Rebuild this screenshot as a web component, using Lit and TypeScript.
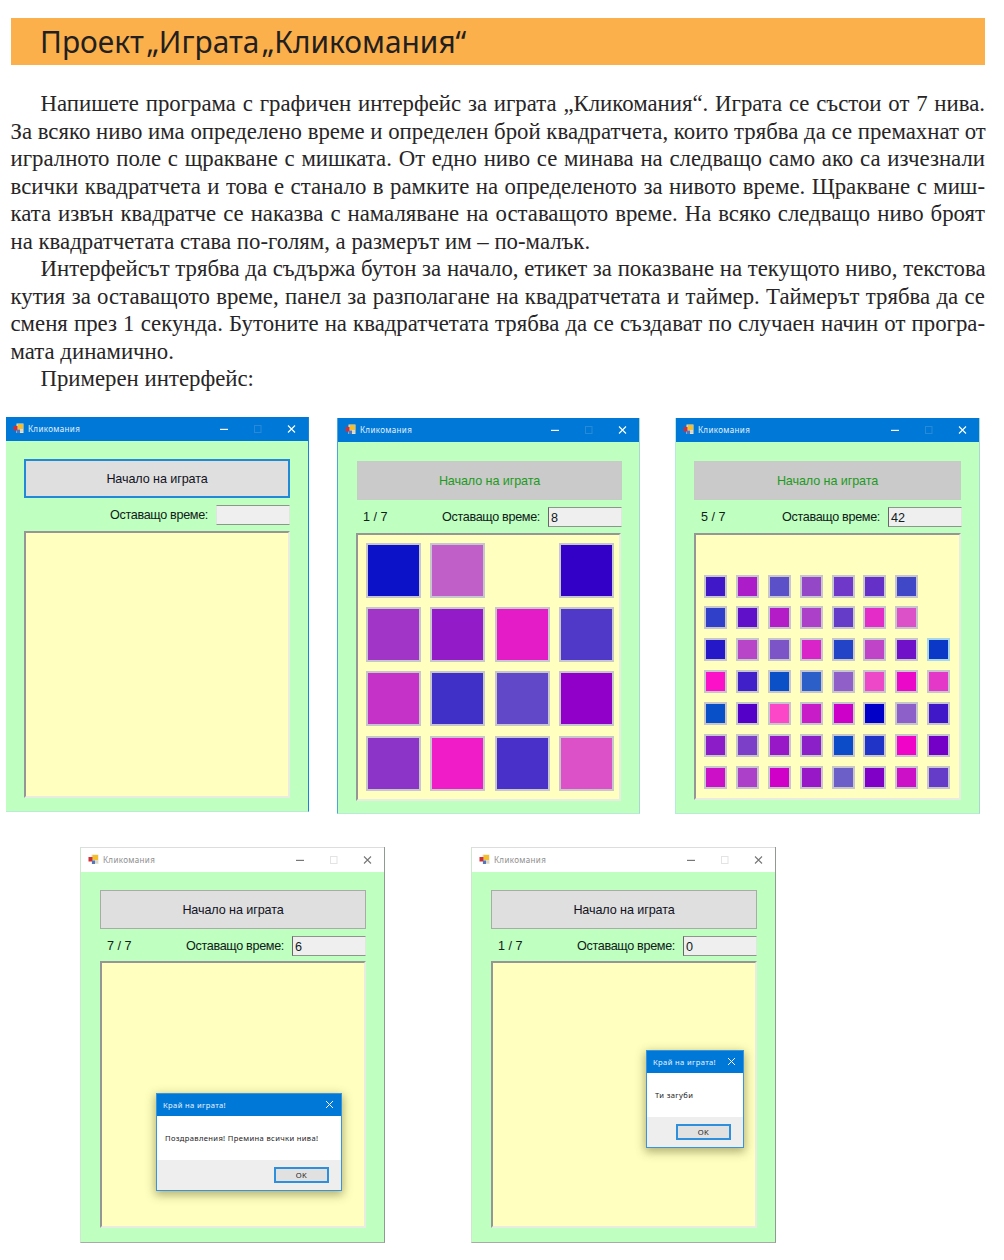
import { LitElement, html, css, svg, nothing } from "lit";
import { customElement, property } from "lit/decorators.js";
import { classMap } from "lit/directives/class-map.js";
import { styleMap } from "lit/directives/style-map.js";

type Line = { text: string; kind?: "indent" | "end" | "indent end"; };

const LINES: Line[] = [
  { text: "Напишете програма с графичен интерфейс за играта „Кликомания“. Играта се състои от 7 нива.", kind: "indent" },
  { text: "За всяко ниво има определено време и определен брой квадратчета, които трябва да се премахнат от" },
  { text: "игралното поле с щракване с мишката. От едно ниво се минава на следващо само ако са изчезнали" },
  { text: "всички квадратчета и това е станало в рамките на определеното за нивото време. Щракване с миш-" },
  { text: "ката извън квадратче се наказва с намаляване на оставащото време. На всяко следващо ниво броят" },
  { text: "на квадратчетата става по-голям, а размерът им – по-малък.", kind: "end" },
  { text: "Интерфейсът трябва да съдържа бутон за начало, етикет за показване на текущото ниво, текстова", kind: "indent" },
  { text: "кутия за оставащото време, панел за разполагане на квадратчетата и таймер. Таймерът трябва да се" },
  { text: "сменя през 1 секунда. Бутоните на квадратчетата трябва да се създават по случаен начин от програ-" },
  { text: "мата динамично.", kind: "end" },
  { text: "Примерен интерфейс:", kind: "indent end" },
];

const LARGE = [
  "#0b12c8", "#c05fc8", "", "#3300c8",
  "#a035c8", "#941cc8", "#e41cc8", "#5038c8",
  "#c432c8", "#4030c8", "#6048c8", "#9000c8",
  "#8c34c8", "#f01cc8", "#4830c8", "#dc50c8",
];

const SMALL = [
  "", "", "", "", "", "", "", "",
  "#4018c8", "#ac1cc8", "#5c50c8", "#9448c8", "#7038c8", "#6430c8", "#4048c8", "",
  "#3040c8", "#6010c8", "#b41cc8", "#ac40c8", "#643cc8", "#e42cc8", "#dc50c8", "",
  "#2418c8", "#b844c8", "#7c54c8", "#d824c8", "#2444c8", "#c044c8", "#7010c8", "#0c38c8",
  "#fc10c8", "#4020c8", "#0c50c8", "#2c60c8", "#9060c8", "#ec48c8", "#ec08c8", "#e438c8",
  "#0850c8", "#5400c8", "#fc48c8", "#c81cc8", "#cc00c8", "#0000c8", "#8c60c8", "#4018c8",
  "#8c1cc8", "#7c40c8", "#9818c8", "#8c20c8", "#0c4cc8", "#2034c8", "#f004c8", "#7400c8",
  "#cc10c8", "#ac40c8", "#d000c8", "#9818c8", "#6c60c8", "#8000c8", "#cc10c8", "#643cc8",
];

@customElement("game-window")
export class GameWindow extends LitElement {
  @property() level = "";
  @property() time = "";
  @property() mode = "idle";
  @property() message = "";
  @property({ type: Boolean }) inactive = false;
  @property({ attribute: false }) tiles: string[] = [];
  @property({ type: Number }) columns = 4;

  static styles = css`
    :host { display: block; position: relative; box-sizing: border-box; font-family: "Liberation Sans", sans-serif; }
    .frame { box-sizing: border-box; height: 100%; background: #bfffbf; display: flex; flex-direction: column; border-right: 1px solid #a9d8d0; border-bottom: 1px solid #b9ecd6; }
    .frame.idle { border-right: 1px solid #1784d8; }
    .frame.play { border-left: 1px solid #4aa6dc; }
    .frame.play.wide { border-left-color: #b4ecd8; }
    .frame.inactive { border-right: 1px solid #8f9b8f; border-bottom: 1px solid #a3ada3; border-left: 1px solid #cfe6cf; }
    .bar { height: 24px; flex: none; background: #0078d7; color: #e6f2fc; display: flex; align-items: center; padding: 0 9px 0 7px; }
    .inactive .bar { background: #fff; color: #8d8d8d; border-top: 1px solid #ddd; box-sizing: border-box; height: 25px; }
    .icon { width: 11px; height: 11px; flex: none; }
    .name { margin-left: 4px; font: 8px/12px "Noto Sans", sans-serif; letter-spacing: 0.35px; flex: 1; white-space: nowrap; }
    .controls { width: 81px; height: 12px; flex: none; }
    .client { flex: 1; padding: 18px 18px 13px; display: flex; flex-direction: column; }
    .play .client { padding-top: 19px; }
    .inactive .client { padding-left: 19px; padding-bottom: 14px; }
    .start { height: 39px; flex: none; box-sizing: border-box; display: flex; align-items: center; justify-content: center; background: #dfdfdf; border: 1px solid #a9aba9; color: #111122; font-size: 12.6px; letter-spacing: -0.1px; line-height: 15px; padding-top: 2px; white-space: nowrap; }
    .idle .start { border: 2px solid #2288d8; }
    .play .start { background: #cacaca; border-color: #c5cbc5; color: #1d9a20; }
    .status { height: 20px; flex: none; margin: 7px 0 6px; display: flex; align-items: center; color: #10201a; font-size: 12.6px; white-space: pre; }
    .inactive .status { margin-bottom: 5px; }
    .play .status { margin-right: -1px; }
    .play:not(.wide) .start { margin: 0 -1px 0 1px; }
    .level, .left { padding-top: 1px; }
    .level { flex: 1; padding-left: 7px; }
    .left { margin-right: 8px; letter-spacing: -0.33px; }
    .time { width: 74px; height: 20px; box-sizing: border-box; background: #efefef; border: 1px solid #8d958d; border-left-color: #666; border-right-color: #dfe8df; padding-left: 2px; line-height: 20px; }
    .idle .time { border-left-color: #dfe6df; }
    .field { flex: 1; box-sizing: border-box; background: #ffffbf; border: 2px solid; border-color: #969696 #e9ece0 #e9ece0 #969696; display: grid; align-content: start; justify-content: start; }
    .field.c4 { grid-template-columns: repeat(4, 55px); grid-auto-rows: 55px; gap: 9.4px; padding: 8px; }
    .field.c8 { grid-template-columns: repeat(8, 23px); grid-auto-rows: 23px; gap: 8.9px; padding: 8px; }
    .tile { border: 2px solid #c6c6cc; }
    .tile.gap { visibility: hidden; }
    .tile.focus { border-color: #a8d8e8; }
    .dialog { position: absolute; box-sizing: border-box; height: 98px; border: 1px solid #3a94dc; background: #fff; box-shadow: 0 3px 9px 1px rgba(80, 80, 30, 0.45); display: flex; flex-direction: column; font: 7.6px/12px "Noto Sans", sans-serif; letter-spacing: 0.35px; }
    .dialog.win { left: 76px; top: 246px; width: 186px; }
    .dialog.lose { left: 175px; top: 203px; width: 98px; }
    .caption { height: 22px; flex: none; background: #0078d7; color: #e8f4ff; display: flex; align-items: center; justify-content: space-between; padding: 0 7px 0 6px; white-space: nowrap; }
    .cross { width: 9px; height: 9px; }
    .text { flex: 1; display: flex; align-items: center; padding-left: 8px; color: #222; white-space: nowrap; }
    .footer { height: 30px; flex: none; background: #eee; display: flex; align-items: center; justify-content: flex-end; padding-right: 12px; }
    .ok { width: 55px; height: 16px; box-sizing: border-box; border: 2px solid #2e90dc; background: #e1e1e1; display: flex; align-items: center; justify-content: center; color: #222; }
  `;

  private get icon() {
    return html`<svg class="icon" viewBox="0 0 11 11">
      <rect x="3.5" y="0.5" width="7" height="9.5" fill="#e7e3c9"></rect>
      <rect x="4.5" y="1" width="5.5" height="5" fill="#f5bf2c"></rect>
      <rect x="0.5" y="3" width="4" height="4.5" fill="#cf3038"></rect>
      <rect x="4" y="6.5" width="3" height="3.5" fill="#5276bd"></rect>
      <rect x="7" y="6.5" width="3" height="2.5" fill="#d9d5c8"></rect>
    </svg>`;
  }

  private get controls() {
    const ink = this.inactive ? "#777" : "#fff";
    const dim = this.inactive ? "#e3e3e3" : "#2889d6";
    return html`<svg class="controls" viewBox="0 0 81 12">
      ${svg`<path d="M2 6.4H10" stroke=${ink} stroke-width="1.2" fill="none"></path>
      <rect x="36.5" y="2.5" width="6.5" height="7" stroke=${dim} fill="none"></rect>
      <path d="M70 2.5L77 9.5M77 2.5L70 9.5" stroke=${ink} stroke-width="1.1" fill="none"></path>`}
    </svg>`;
  }

  private get dialog() {
    if (!this.message) return nothing;
    return html`<div class="dialog ${this.mode}">
      <div class="caption"><span>Край на играта!</span>
        <svg class="cross" viewBox="0 0 9 9"><path d="M1 1L8 8M8 1L1 8" stroke="#fff" fill="none"></path></svg>
      </div>
      <div class="text">${this.message}</div>
      <div class="footer"><div class="ok">OK</div></div>
    </div>`;
  }

  render() {
    return html`<div class=${classMap({ frame: true, [this.mode]: true, inactive: this.inactive, wide: this.columns === 8 })}>
        <div class="bar">${this.icon}<span class="name">Кликомания</span>${this.controls}</div>
        <div class="client">
          <div class="start">Начало на играта</div>
          <div class="status"><span class="level">${this.level}</span><span class="left">Оставащо време:</span><div class="time">${this.time}</div></div>
          <div class="field c${this.columns}">
            ${this.tiles.map((c, i) => html`<div class=${classMap({ tile: true, gap: !c, focus: this.columns === 8 && i === 31 })} style=${styleMap({ background: c || "none" })}></div>`)}
          </div>
        </div>
      </div>${this.dialog}`;
  }
}

@customElement("app-root")
export class AppRoot extends LitElement {
  static styles = css`
    :host { display: block; box-sizing: border-box; width: 1004px; height: 1260px; background: #fff; overflow: hidden; padding-top: 18px; }
    .heading { margin-left: 10.5px; width: 974.5px; height: 47px; box-sizing: border-box; padding-left: 29.5px; background: #fcb04c; color: #231f20; display: flex; align-items: center; }
    .heading span { font: 31px/46px "Noto Sans", sans-serif; white-space: nowrap; transform: scaleX(0.963); transform-origin: left; word-spacing: -5.5px; margin-top: -2px; }
    .copy { margin: 25px 0 0 10.5px; width: 974.5px; font-family: "Liberation Serif", serif; font-size: 22.8px; line-height: 27.53px; color: #272526; }
    .line { height: 27.53px; text-align-last: justify; white-space: nowrap; }
    .indent { padding-left: 30px; }
    .end { text-align-last: left; }
    .row { display: flex; align-items: flex-start; }
    .first { margin-top: 24px; padding-left: 6px; height: 397px; }
    .second { margin-top: 33px; padding-left: 80px; }
    .w1 { width: 303px; height: 395px; }
    .w2 { width: 303px; height: 396px; margin: 1px 0 0 28px; }
    .w3 { width: 305px; height: 396px; margin: 1px 0 0 35px; }
    .w4 { width: 305px; height: 396px; }
    .w5 { width: 305px; height: 396px; margin-left: 86px; }
  `;

  render() {
    return html`
      <div class="heading"><span>Проект „Играта „Кликомания“</span></div>
      <div class="copy">${LINES.map((l) => html`<div class="line ${l.kind ?? ""}">${l.text}</div>`)}</div>
      <div class="row first">
        <game-window class="w1" mode="idle"></game-window>
        <game-window class="w2" mode="play" level="1 / 7" time="8" .tiles=${LARGE}></game-window>
        <game-window class="w3" mode="play" level="5 / 7" time="42" .columns=${8} .tiles=${SMALL}></game-window>
      </div>
      <div class="row second">
        <game-window class="w4" mode="win" inactive level="7 / 7" time="6" message="Поздравления! Премина всички нива!"></game-window>
        <game-window class="w5" mode="lose" inactive level="1 / 7" time="0" message="Ти загуби"></game-window>
      </div>`;
  }
}
